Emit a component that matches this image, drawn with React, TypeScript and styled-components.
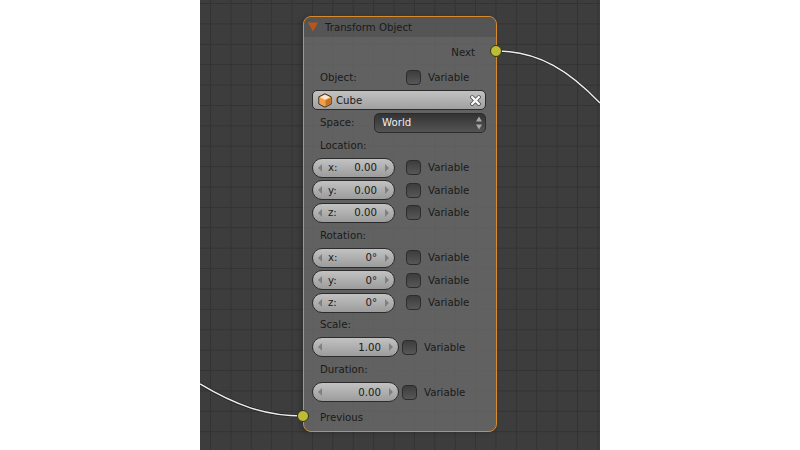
import styled, { createGlobalStyle } from 'styled-components'

const GlobalStyle = createGlobalStyle`
  html, body {
    margin: 0;
    padding: 0;
    background: #fff;
  }
  body {
    font-family: "DejaVu Sans", "Liberation Sans", sans-serif;
    font-size: 10.2px;
    color: #1a1a1a;
  }
`

const Page = styled.div`
  width: 800px;
  height: 450px;
  display: flex;
  justify-content: center;
  overflow: hidden;
`

const Canvas = styled.div`
  position: relative;
  width: 400px;
  height: 450px;
  background-color: #3d3d3d;
  background-image:
    linear-gradient(to right, #333 1px, transparent 1px),
    linear-gradient(to bottom, #333 1px, transparent 1px);
  background-size: 20.4px 20.4px;
  background-position: 10px 3px;
`

const Wires = styled.svg`
  position: absolute;
  inset: 0;
`

const Node = styled.div`
  position: absolute;
  left: 103px;
  top: 16px;
  box-sizing: border-box;
  width: 194px;
  height: 416px;
  border: 1px solid #d98a2b;
  border-radius: 8px;
  background: rgba(105, 105, 105, 0.82);
  box-shadow: -3px 1px 5px rgba(0, 0, 0, 0.18);
`

const Header = styled.div`
  display: flex;
  align-items: center;
  gap: 7px;
  height: 20px;
  padding-left: 4px;
  border-radius: 7px 7px 0 0;
  background: rgba(70, 70, 70, 0.45);
`

const Collapse = styled.svg`
  width: 10px;
  height: 10px;
  flex: none;
`

const Body = styled.div`
  display: flex;
  flex-direction: column;
  padding: 4.3px 9px 0 8px;
`

const Row = styled.div<{ $gap?: number; $end?: boolean }>`
  display: flex;
  align-items: center;
  justify-content: ${(p) => (p.$end ? 'flex-end' : 'flex-start')};
  height: 22.46px;
  margin-top: ${(p) => p.$gap ?? 0}px;
  padding-right: ${(p) => (p.$end ? '12px' : '0')};
`

const Label = styled.span<{ $width?: number }>`
  box-sizing: border-box;
  flex: none;
  width: ${(p) => (p.$width ? `${p.$width}px` : 'auto')};
  padding-left: 8px;
  white-space: nowrap;
`

const Field = styled.div<{ $wide?: boolean }>`
  position: relative;
  box-sizing: border-box;
  display: flex;
  align-items: center;
  justify-content: space-between;
  flex: none;
  width: ${(p) => (p.$wide ? 87 : 83)}px;
  height: 20px;
  padding: 0 17px 0 15px;
  border: 1px solid #2c2c2c;
  border-radius: 10px;
  background: linear-gradient(to bottom, #c2c2c2, #9c9c9c);
`

const Arrow = styled.i<{ $side: 'left' | 'right' }>`
  position: absolute;
  top: 5px;
  ${(p) => p.$side}: 5px;
  width: 0;
  height: 0;
  border-top: 4px solid transparent;
  border-bottom: 4px solid transparent;
  ${(p) => (p.$side === 'left' ? 'border-right' : 'border-left')}: 4px solid #808080;
`

const VarGroup = styled.label<{ $wide?: boolean }>`
  display: flex;
  align-items: center;
  gap: 7px;
  margin-left: ${(p) => (p.$wide ? 3 : 11)}px;
`

const Check = styled.span`
  box-sizing: border-box;
  flex: none;
  width: 15px;
  height: 15px;
  border: 1px solid #2c2c2c;
  border-radius: 4px;
  background: linear-gradient(to bottom, #3d3d3d, #575757);
`

const ObjectPicker = styled.div`
  box-sizing: border-box;
  display: flex;
  align-items: center;
  gap: 4px;
  width: 174px;
  height: 20px;
  padding: 0 4px 0 5px;
  border: 1px solid #2c2c2c;
  border-radius: 5px;
  background: linear-gradient(to bottom, #c2c2c2, #a0a0a0);
`

const ObjectName = styled.span`
  flex: 1;
`

const Select = styled.div`
  box-sizing: border-box;
  display: flex;
  align-items: center;
  justify-content: space-between;
  width: 112px;
  height: 20px;
  padding: 0 3px 0 7px;
  border: 1px solid #2c2c2c;
  border-radius: 5px;
  color: #efefef;
  background: linear-gradient(to bottom, #333, #545454);
`

const Socket = styled.span<{ $side: 'left' | 'right'; $top: number }>`
  position: absolute;
  top: ${(p) => p.$top}px;
  ${(p) => p.$side}: ${(p) => (p.$side === 'left' ? -7 : -6)}px;
  box-sizing: border-box;
  width: 12px;
  height: 12px;
  border: 1px solid #33331c;
  border-radius: 50%;
  background: #bcbc36;
`

const Variable = ({ wide }: { wide?: boolean }) => (
  <VarGroup $wide={wide}>
    <Check />
    Variable
  </VarGroup>
)

const NumberRow = ({ axis, value }: { axis: string; value: string }) => (
  <Row>
    <Field>
      <Arrow $side="left" />
      <span>{axis}</span>
      <span>{value}</span>
      <Arrow $side="right" />
    </Field>
    <Variable />
  </Row>
)

const WideRow = ({ value }: { value: string }) => (
  <Row>
    <Field $wide>
      <Arrow $side="left" />
      <span />
      <span>{value}</span>
      <Arrow $side="right" />
    </Field>
    <Variable wide />
  </Row>
)

const CubeIcon = () => (
  <svg width="14" height="15" viewBox="0 0 14 15">
    <path d="M7 .8 L13.2 3.8 V11 L7 14.2 L.8 11 V3.8 Z" fill="#f2a24a" stroke="#3a3026" strokeWidth="1" strokeLinejoin="round" />
    <path d="M7 1.8 L12 4.2 L7 6.8 L2 4.2 Z" fill="#f9e8d0" />
    <path d="M1.8 5 L6.5 7.5 V13.2 L1.8 10.6 Z" fill="#f0a04c" />
    <path d="M12.2 5 L7.5 7.5 V13.2 L12.2 10.6 Z" fill="#c87220" />
  </svg>
)

const ClearIcon = () => (
  <svg width="11" height="11" viewBox="0 0 11 11">
    <path d="M2.2 2.2 L8.8 8.8 M8.8 2.2 L2.2 8.8" stroke="#333" strokeWidth="3.8" strokeLinecap="round" />
    <path d="M2.2 2.2 L8.8 8.8 M8.8 2.2 L2.2 8.8" stroke="#f6f6f6" strokeWidth="2.6" strokeLinecap="round" />
  </svg>
)

const UpDownIcon = () => (
  <svg width="6" height="14" viewBox="0 0 6 14">
    <path d="M3 0.5 L6 5.5 H0 Z M3 13.5 L0 8.5 H6 Z" fill="#a8a8a8" />
  </svg>
)

export default function App() {
  return (
    <Page>
      <GlobalStyle />
      <Canvas>
        <Wires width="400" height="450" viewBox="0 0 400 450" fill="none">
          <path d="M296 51 C340 51 370 72 400 103" stroke="#222" strokeWidth="2.8" />
          <path d="M296 51 C340 51 370 72 400 103" stroke="#eeeeee" strokeWidth="1.5" />
          <path d="M0 384 C35 405 65 416 103 416" stroke="#222" strokeWidth="2.8" />
          <path d="M0 384 C35 405 65 416 103 416" stroke="#eeeeee" strokeWidth="1.5" />
        </Wires>
        <Node>
          <Socket $side="right" $top={28} />
          <Socket $side="left" $top={393} />
          <Header>
            <Collapse viewBox="0 0 10 10">
              <path d="M0 0.5 H10 L5 9.5 Z" fill="#b9551a" />
            </Collapse>
            Transform Object
          </Header>
          <Body>
            <Row $end>Next</Row>
            <Row $gap={3}>
              <Label $width={83}>Object:</Label>
              <Variable />
            </Row>
            <Row>
              <ObjectPicker>
                <CubeIcon />
                <ObjectName>Cube</ObjectName>
                <ClearIcon />
              </ObjectPicker>
            </Row>
            <Row>
              <Label $width={62}>Space:</Label>
              <Select>
                World
                <UpDownIcon />
              </Select>
            </Row>
            <Row>
              <Label>Location:</Label>
            </Row>
            <NumberRow axis="x:" value="0.00" />
            <NumberRow axis="y:" value="0.00" />
            <NumberRow axis="z:" value="0.00" />
            <Row>
              <Label>Rotation:</Label>
            </Row>
            <NumberRow axis="x:" value="0°" />
            <NumberRow axis="y:" value="0°" />
            <NumberRow axis="z:" value="0°" />
            <Row>
              <Label>Scale:</Label>
            </Row>
            <WideRow value="1.00" />
            <Row>
              <Label>Duration:</Label>
            </Row>
            <WideRow value="0.00" />
            <Row $gap={3}>
              <Label>Previous</Label>
            </Row>
          </Body>
        </Node>
      </Canvas>
    </Page>
  )
}
